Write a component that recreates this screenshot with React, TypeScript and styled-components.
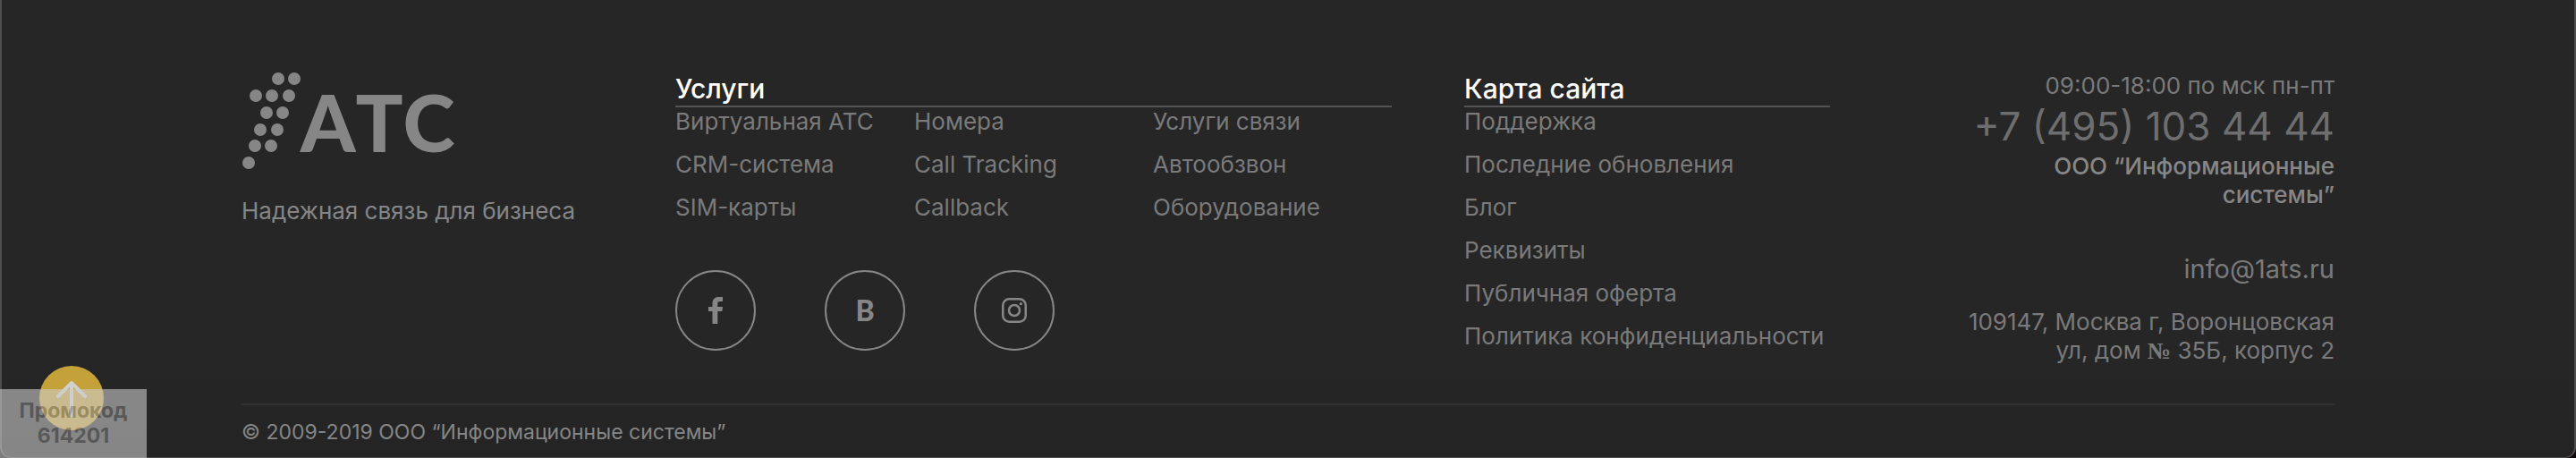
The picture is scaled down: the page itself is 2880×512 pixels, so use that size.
import React from 'react';
import styled, { createGlobalStyle } from 'styled-components';

const GlobalStyle = createGlobalStyle`
  *, *::before, *::after { box-sizing: border-box; }
  body {
    margin: 0;
    background: #0e0a0a;
    font-family: Inter, "Noto Sans", sans-serif;
    color: #868686;
  }
  h2, p, ul, address { margin: 0; padding: 0; font-style: normal; }
  a { color: inherit; text-decoration: none; }
`;

const Page = styled.div`
  position: relative;
  padding-bottom: 1px;
`;

const Footer = styled.footer`
  padding: 80px 32px 12px;
  background: linear-gradient(#262626 80%, #242424);
  border: solid #4e4e4e;
  border-width: 0 2px 1px;
  border-radius: 0 0 12px 12px;
`;

const Container = styled.div`
  max-width: 2340px;
  margin: 0 auto;
`;

const Columns = styled.div`
  display: grid;
  grid-template-columns: 404fr 801fr 409fr 483fr;
  column-gap: 81px;
  padding-bottom: 42px;
  border-bottom: 2px solid #313131;
`;

const Logo = styled.svg`
  display: block;
  width: 242px;
  height: 110px;
`;

const LogoName = styled.text`
  font: 900 88px Lato, sans-serif;
  font-kerning: none;
  fill: #868686;
`;

const Tagline = styled.p`
  margin-top: 30px;
  font-size: 26px;
  line-height: 32px;
  white-space: nowrap;
`;

const Title = styled.h2`
  height: 40px;
  border-bottom: 2px solid #535353;
  font-size: 30px;
  font-weight: 500;
  line-height: 38px;
  color: #fff;
`;

const Links = styled.ul<{ $columns: number }>`
  display: grid;
  grid-template-columns: repeat(${(p) => p.$columns}, 1fr);
  row-gap: 16px;
  list-style: none;
  font-size: 26px;
  line-height: 32px;
  white-space: nowrap;
  color: #7a7a7a;
`;

const Social = styled.div`
  display: flex;
  gap: 77px;
  margin-top: 54px;
`;

const SocialLink = styled.a`
  display: flex;
  align-items: center;
  justify-content: center;
  width: 90px;
  height: 90px;
  border: 2px solid #868686;
  border-radius: 50%;
  font: 900 32px/32px Lato, sans-serif;
`;

const Contacts = styled.address`
  text-align: right;
  font-size: 26px;
  line-height: 32px;
  color: #7a7a7a;
`;

const Phone = styled.a`
  display: block;
  font-size: 44px;
  line-height: 58px;
  color: #6e6e6e;
  white-space: nowrap;
`;

const Company = styled.p`
  padding-left: 100px;
  font-weight: 500;
  color: #868686;
`;

const Email = styled.a`
  display: block;
  margin: 49px 0 25px;
  font-size: 29px;
  line-height: 36px;
`;

const NumberSign = styled.span`
  font-family: "Liberation Serif", serif;
  font-weight: 700;
`;

const Copyright = styled.p`
  padding-top: 14px;
  font-size: 23px;
  line-height: 32px;
`;

const UpButton = styled.button`
  position: absolute;
  left: 44px;
  bottom: 32px;
  display: flex;
  align-items: center;
  justify-content: center;
  width: 72px;
  height: 72px;
  padding: 0;
  border: 0;
  border-radius: 50%;
  background: #c4a139;
`;

const Promo = styled.p`
  position: absolute;
  left: 0;
  bottom: 0;
  width: 164px;
  padding: 10px 0 12px;
  background: #cecece;
  opacity: 0.58;
  pointer-events: none;
  text-align: center;
  font-size: 23px;
  font-weight: 700;
  line-height: 28px;
  color: #7e7e7e;
`;

const dots = [
  [41, 8], [59, 8],
  [16, 27], [34, 27], [53, 27],
  [28, 46], [46, 46],
  [21, 65], [40, 65],
  [15, 83], [33, 83],
  [8, 102],
];

const services = [
  'Виртуальная АТС', 'Номера', 'Услуги связи',
  'CRM-система', 'Call Tracking', 'Автообзвон',
  'SIM-карты', 'Callback', 'Оборудование',
];

const siteMap = [
  'Поддержка', 'Последние обновления', 'Блог',
  'Реквизиты', 'Публичная оферта', 'Политика конфиденциальности',
];

function LinkList({ items, columns = 1 }: { items: string[]; columns?: number }) {
  return (
    <Links $columns={columns}>
      {items.map((item) => (
        <li key={item}><a href="#">{item}</a></li>
      ))}
    </Links>
  );
}

export default function App() {
  return (
    <>
      <GlobalStyle />
      <Page>
        <Footer>
          <Container>
            <Columns>
              <div>
                <Logo viewBox="0 0 242 110" role="img" aria-label="АТС">
                  {dots.map(([x, y]) => (
                    <circle key={`${x}-${y}`} cx={x} cy={y} r="7" fill="#868686" />
                  ))}
                  <LogoName x="66" y="90">АТС</LogoName>
                </Logo>
                <Tagline>Надежная связь для бизнеса</Tagline>
              </div>
              <section>
                <Title>Услуги</Title>
                <LinkList items={services} columns={3} />
                <Social>
                  <SocialLink href="#" aria-label="Facebook">
                    <svg width="16" height="30" viewBox="0 0 16 30" fill="currentColor">
                      <path d="M4.5 30V16H0v-5h4.500V7.500C4.500 2.500 7 0 11.500 0H16v5h-3c-2 0-2.700.8-2.700 2.600V11H16l-.6 5h-5.100v14z" />
                    </svg>
                  </SocialLink>
                  <SocialLink href="#" aria-label="ВКонтакте">В</SocialLink>
                  <SocialLink href="#" aria-label="Instagram">
                    <svg width="28" height="28" viewBox="0 0 28 28" fill="none" stroke="currentColor" strokeWidth="2.500">
                      <rect x="1.250" y="1.250" width="25.500" height="25.500" rx="7" />
                      <circle cx="14" cy="14" r="6" />
                      <circle cx="21.300" cy="6.700" r="1.600" fill="currentColor" stroke="none" />
                    </svg>
                  </SocialLink>
                </Social>
              </section>
              <section>
                <Title>Карта сайта</Title>
                <LinkList items={siteMap} />
              </section>
              <Contacts>
                <p>09:00-18:00 по мск пн-пт</p>
                <Phone href="tel:+74951034444">+7 (495) 103 44 44</Phone>
                <Company>ООО “Информационные системы”</Company>
                <Email href="mailto:info@1ats.ru">info@1ats.ru</Email>
                <p>
                  109147, Москва г, Воронцовская<br />
                  ул, дом <NumberSign>№</NumberSign> 35Б, корпус 2
                </p>
              </Contacts>
            </Columns>
            <Copyright>© 2009-2019 ООО “Информационные системы”</Copyright>
          </Container>
        </Footer>
        <UpButton type="button" aria-label="Наверх">
          <svg width="36" height="42" viewBox="0 0 36 42" fill="none" stroke="#d0d0d0" strokeWidth="4" strokeLinecap="round" strokeLinejoin="round">
            <path d="M18 40V4M3 19 18 4l15 15" />
          </svg>
        </UpButton>
        <Promo>Промокод<br />614201</Promo>
      </Page>
    </>
  );
}
